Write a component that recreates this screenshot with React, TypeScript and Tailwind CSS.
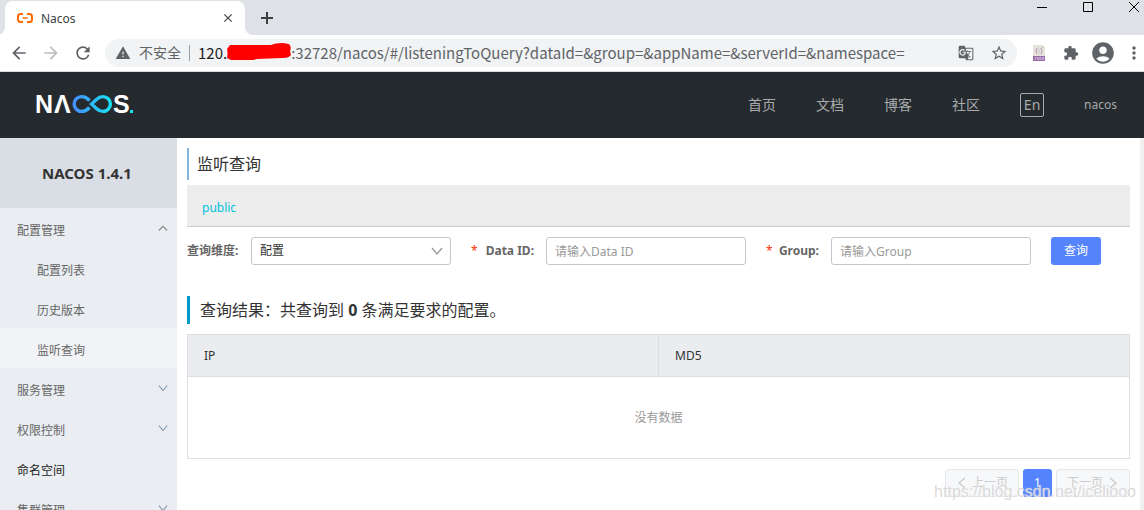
import { useState } from "react";
import {
  MdAccountCircle,
  MdArrowBack,
  MdArrowForward,
  MdClose,
  MdExtension,
  MdGTranslate,
  MdMoreVert,
  MdRefresh,
  MdStarBorder,
  MdWarning,
} from "react-icons/md";

type ChevronProps = {
  direction: "up" | "down" | "left" | "right";
  className?: string;
};

const chevronPoints = {
  up: "1,9 6,4 11,9",
  down: "1,3 6,9 11,3",
  left: "9,1 3,6 9,11",
  right: "3,1 9,6 3,11",
};

const Chevron = ({ direction, className }: ChevronProps) => (
  <svg
    viewBox="0 0 12 12"
    className={className}
    fill="none"
    stroke="currentColor"
    strokeWidth="1.3"
    aria-hidden="true"
  >
    <polyline points={chevronPoints[direction]} />
  </svg>
);

const TabBar = () => (
  <div className="flex h-[35px] justify-between bg-[#dee1e6] pl-[5px]">
    <div className="flex items-end">
      <div className="relative flex h-[34px] w-60 items-center rounded-t-lg bg-white px-[10px]">
        <svg
          viewBox="0 0 8 8"
          className="absolute bottom-0 -left-2 size-2"
          aria-hidden="true"
        >
          <path d="M8 0A8 8 0 0 1 0 8H8Z" fill="#fff" />
        </svg>
        <svg
          viewBox="0 0 8 8"
          className="absolute -right-2 bottom-0 size-2"
          aria-hidden="true"
        >
          <path d="M0 0A8 8 0 0 0 8 8H0Z" fill="#fff" />
        </svg>
        <svg
          viewBox="0 0 16 10"
          className="ml-0.5 h-[10px] w-4"
          fill="none"
          stroke="#ff6a00"
          aria-hidden="true"
        >
          <path
            d="M6 1H3.500Q1 1 1 3.500V6.500Q1 9 3.500 9H6M10 1H12.500Q15 1 15 3.500V6.500Q15 9 12.500 9H10"
            strokeWidth="2"
          />
          <path d="M5.500 5H10.500" strokeWidth="1.500" />
        </svg>
        <span className="ml-2 flex-1 pt-0.5 text-xs text-[#3c4043]">Nacos</span>
        <button type="button" aria-label="关闭标签页">
          <MdClose className="size-3.5 text-[#3c4043]" />
        </button>
      </div>
      <button
        type="button"
        aria-label="新标签页"
        className="ml-4 flex h-[34px] items-center text-[#3c4043]"
      >
        <svg viewBox="0 0 12 12" className="size-3" stroke="currentColor">
          <path d="M6 0V12M0 6H12" strokeWidth="2" />
        </svg>
      </button>
    </div>
    <div className="flex gap-9 pt-0.5 pr-[5px] text-black">
      <button type="button" aria-label="最小化" className="h-[10px]">
        <svg viewBox="0 0 10 10" className="size-[10px]" stroke="currentColor">
          <path d="M0 5.500H10" />
        </svg>
      </button>
      <button type="button" aria-label="最大化" className="h-[10px]">
        <svg
          viewBox="0 0 10 10"
          className="size-[10px]"
          fill="none"
          stroke="currentColor"
        >
          <path d="M.5.5H9.500V9.500H.5Z" />
        </svg>
      </button>
      <button type="button" aria-label="关闭" className="h-[10px]">
        <svg viewBox="0 0 10 10" className="size-[10px]" stroke="currentColor">
          <path d="M0 0L10 10M10 0L0 10" />
        </svg>
      </button>
    </div>
  </div>
);

const JsonIcon = () => (
  <svg viewBox="0 0 12 16" className="h-4 w-3" aria-hidden="true">
    <path d="M0 0H9L12 3V11H0Z" fill="#e6e4da" />
    <path d="M9 0V3H12Z" fill="#cfccbf" />
    <path
      d="M4.500 3.500H3.500V5.500L2.500 6L3.500 6.500V8.500H4.500M7.500 3.500H8.500V5.500L9.500 6L8.500 6.500V8.500H7.500M6 4.500V5.500M6 6.500V7.500"
      fill="none"
      stroke="#b598bd"
      strokeWidth=".9"
    />
    <path d="M0 11H12V16H0Z" fill="#9a6bab" />
    <path
      d="M2.500 12V14.500H1.500M5.500 12.500H4V13.500H5.500V14.500H4M6.700 12.500H8V14.500H6.700ZM9.500 15V12.500H10.700V15"
      fill="none"
      stroke="#e3d3e8"
      strokeWidth=".6"
    />
  </svg>
);

const Toolbar = () => {
  const [url, setUrl] = useState(
    ":32728/nacos/#/listeningToQuery?dataId=&group=&appName=&serverId=&namespace="
  );

  return (
    <div className="flex h-[37px] items-center border-b border-[#d9dbde] bg-white pl-[9px] text-[#5f6368]">
      <div className="flex gap-3">
        <button type="button" aria-label="后退">
          <MdArrowBack className="size-5" />
        </button>
        <button type="button" aria-label="前进" className="text-[#babcbe]">
          <MdArrowForward className="size-5" />
        </button>
        <button type="button" aria-label="重新加载">
          <MdRefresh className="size-5" />
        </button>
      </div>
      <div className="ml-3 flex h-7 flex-1 items-center rounded-full bg-[#f1f3f4] pr-[9px] pl-[10px]">
        <MdWarning className="size-4" />
        <span className="ml-2 text-sm">不安全</span>
        <span className="mx-2 h-4 w-px bg-[#9aa0a6]" />
        <span className="font-['Noto_Sans_CJK_SC',sans-serif] text-[15px] text-[#202124]">
          120.
        </span>
        <svg
          viewBox="0 0 64 17"
          className="mb-1 h-[17px] w-16 shrink-0"
          aria-hidden="true"
        >
          <path
            d="M3 2L44 2Q48 0 56 0L62 1Q65 4 63 8L64 12Q62 15 56 15L30 16L26 17H4L0 15Q1 10 0 6Z"
            fill="#f00"
          />
        </svg>
        <input
          aria-label="地址"
          className="min-w-0 flex-1 bg-transparent font-['Noto_Sans_CJK_SC',sans-serif] text-[15px] outline-none"
          value={url}
          onChange={(e) => setUrl(e.target.value)}
        />
        <button type="button" aria-label="翻译此页">
          <MdGTranslate className="size-4" />
        </button>
        <button type="button" aria-label="收藏" className="ml-4">
          <MdStarBorder className="size-[18px]" />
        </button>
      </div>
      <div className="ml-4 flex items-center">
        <button type="button" aria-label="JSON">
          <JsonIcon />
        </button>
        <button type="button" aria-label="扩展程序" className="ml-[18px]">
          <MdExtension className="size-4" />
        </button>
        <button type="button" aria-label="用户" className="ml-[11px]">
          <MdAccountCircle className="size-[26px]" />
        </button>
        <button type="button" aria-label="更多" className="ml-2">
          <MdMoreVert className="size-5" />
        </button>
      </div>
    </div>
  );
};

const Logo = () => (
  <svg
    viewBox="0 0 98 20"
    className="h-5 w-[98px] overflow-visible"
    aria-label="Nacos"
  >
    <defs>
      <linearGradient
        id="loop"
        gradientUnits="userSpaceOnUse"
        x1="37"
        x2="76"
        y1="0"
        y2="0"
      >
        <stop offset="0" stopColor="#468cff" />
        <stop offset="1" stopColor="#16e5f5" />
      </linearGradient>
    </defs>
    <g
      fill="#fff"
      fontFamily="'Liberation Sans', sans-serif"
      fontSize="25"
      fontWeight="700"
    >
      <text x="-1" y="18">
        N
      </text>
      <text x="18" y="18">
        Λ
      </text>
      <text x="77" y="18">
        S
      </text>
    </g>
    <path
      d="M53.500 5.500Q50 1.600 45.500 1.600A7.400 7.400 0 0 0 45.500 16.400Q50 16.400 53.500 12.500M55.500 9L61 4Q63.500 1.600 67 1.600A7.400 7.400 0 0 1 67 16.400Q63.500 16.400 61 14Z"
      fill="none"
      stroke="url(#loop)"
      strokeWidth="3.400"
    />
    <path d="M94 15H97V18H94Z" fill="#16e5f5" />
  </svg>
);

const navItems = ["首页", "文档", "博客", "社区"];

const Header = () => (
  <header className="flex h-[66px] shrink-0 items-center justify-between bg-[#252a2f] pr-[27px] pl-9">
    <a href="#home">
      <Logo />
    </a>
    <nav className="flex items-center gap-10 text-sm text-[#a8aaac]">
      {navItems.map((item) => (
        <a key={item} href="#nav">
          {item}
        </a>
      ))}
      <button
        type="button"
        className="flex size-6 items-center justify-center rounded-xs border border-[#a8aaac]"
      >
        En
      </button>
      <a href="#user" className="text-xs">
        nacos
      </a>
    </nav>
  </header>
);

type MenuItem = {
  label: string;
  type?: "open" | "closed" | "sub";
  active?: boolean;
  dark?: boolean;
};

const menu: MenuItem[] = [
  { label: "配置管理", type: "open" },
  { label: "配置列表", type: "sub" },
  { label: "历史版本", type: "sub" },
  { label: "监听查询", type: "sub", active: true },
  { label: "服务管理", type: "closed" },
  { label: "权限控制", type: "closed" },
  { label: "命名空间", dark: true },
  { label: "集群管理", type: "closed" },
];

const Sidebar = () => (
  <aside className="w-[177px] shrink-0 overflow-hidden bg-[#eaedf1]">
    <h1 className="flex h-[70px] items-center bg-[#d9dde4] pl-[42px] text-[15px] font-bold text-[#333]">
      NACOS 1.4.1
    </h1>
    <ul>
      {menu.map(({ label, type, active, dark }) => (
        <li key={label} className={active ? "bg-[#f2f3f7]" : ""}>
          <a
            href="#menu"
            className={`flex h-10 items-center justify-between pr-[9px] text-xs ${
              type === "sub" ? "pl-[37px]" : "pl-[17px]"
            } ${dark ? "text-[#222]" : "text-[#666]"}`}
          >
            <span className="pt-1.5">{label}</span>
            {type === "open" && (
              <Chevron direction="up" className="size-[10px] text-[#888]" />
            )}
            {type === "closed" && (
              <Chevron direction="down" className="size-[10px] text-[#7c93a8]" />
            )}
          </a>
        </li>
      ))}
    </ul>
  </aside>
);

const fieldClass =
  "h-7 w-[200px] rounded-[3px] border border-[#c4c6cf] bg-white px-2 text-xs text-[#333] outline-none placeholder:text-[#999]";

const QueryForm = () => {
  const [type, setType] = useState("config");
  const [dataId, setDataId] = useState("");
  const [group, setGroup] = useState("");

  return (
    <form
      className="mt-[10px] flex items-center gap-5 text-xs"
      onSubmit={(e) => e.preventDefault()}
    >
      <div className="flex items-center gap-3">
        <label htmlFor="type" className="w-[52px] font-bold text-[#666]">
          查询维度:
        </label>
        <div className="relative">
          <select
            id="type"
            className={`${fieldClass} block appearance-none`}
            value={type}
            onChange={(e) => setType(e.target.value)}
          >
            <option value="config">配置</option>
            <option value="ip">IP</option>
          </select>
          <Chevron
            direction="down"
            className="pointer-events-none absolute top-2 right-2 size-3 text-[#999]"
          />
        </div>
      </div>
      <div className="flex items-center gap-3">
        <label
          htmlFor="dataId"
          className="flex w-[63px] justify-between font-bold text-[#666]"
        >
          <span className="font-normal text-[#ff3000]">*</span>
          Data ID:
        </label>
        <input
          id="dataId"
          className={fieldClass}
          placeholder="请输入Data ID"
          value={dataId}
          onChange={(e) => setDataId(e.target.value)}
        />
      </div>
      <div className="flex items-center gap-3">
        <label
          htmlFor="group"
          className="flex w-[53px] justify-between font-bold text-[#666]"
        >
          <span className="font-normal text-[#ff3000]">*</span>
          Group:
        </label>
        <input
          id="group"
          className={fieldClass}
          placeholder="请输入Group"
          value={group}
          onChange={(e) => setGroup(e.target.value)}
        />
      </div>
      <button className="h-7 rounded-[3px] bg-[#5584ff] px-[13px] text-white">
        查询
      </button>
    </form>
  );
};

const ResultTable = () => (
  <table className="mt-[10px] w-full table-fixed border-collapse border border-[#dcdee3] text-xs">
    <thead>
      <tr className="h-[42px] bg-[#ebecf0] text-left text-[#333]">
        <th className="border border-[#dcdee3] px-4 font-normal">IP</th>
        <th className="border border-[#dcdee3] px-4 font-normal">MD5</th>
      </tr>
    </thead>
    <tbody>
      <tr className="h-[82px]">
        <td colSpan={2} className="text-center text-[#999]">
          没有数据
        </td>
      </tr>
    </tbody>
  </table>
);

const pagerClass =
  "flex h-7 w-[74px] items-center justify-center gap-1 rounded-[3px] border border-[#e6e7eb] bg-[#f7f8fa] text-[#ccc]";

const Pagination = () => (
  <div className="mt-[10px] flex justify-end gap-1 text-xs">
    <button type="button" disabled className={pagerClass}>
      <Chevron direction="left" className="size-3" />
      上一页
    </button>
    <button type="button" className="h-7 w-[29px] rounded-[3px] bg-[#5584ff] text-white">
      1
    </button>
    <button type="button" disabled className={pagerClass}>
      下一页
      <Chevron direction="right" className="size-3" />
    </button>
  </div>
);

const App = () => (
  <div className="relative flex h-screen flex-col overflow-hidden bg-white font-['Noto_Sans','Noto_Sans_CJK_SC',sans-serif]">
    <TabBar />
    <Toolbar />
    <Header />
    <div className="flex min-h-0 flex-1">
      <Sidebar />
      <main className="min-w-0 flex-1 overflow-hidden border-r-4 border-[#f0f0f0] p-[10px]">
        <h2 className="h-8 border-l-2 border-[#87b5dd] pl-2 text-base leading-8 text-[#333]">
          监听查询
        </h2>
        <div className="mt-[5px] flex h-[42px] items-center border-b border-[#ccc] bg-[#ededed] px-[15px] text-xs">
          <a href="#public" className="pt-1 text-[#00c1de]">
            public
          </a>
        </div>
        <QueryForm />
        <h3 className="mt-[31px] h-7 border-l-[3px] border-[#09c] pl-[10px] text-base leading-7 text-[#333]">
          查询结果：共查询到 <strong>0</strong> 条满足要求的配置。
        </h3>
        <ResultTable />
        <Pagination />
      </main>
    </div>
    <span className="pointer-events-none absolute right-2 bottom-1 font-['Liberation_Sans',sans-serif] text-base leading-7 text-[#d0d0d0]/80 [text-shadow:0_0_1px_#fff]">
      https://blog.csdn.net/iceliooo
    </span>
  </div>
);

export default App;
